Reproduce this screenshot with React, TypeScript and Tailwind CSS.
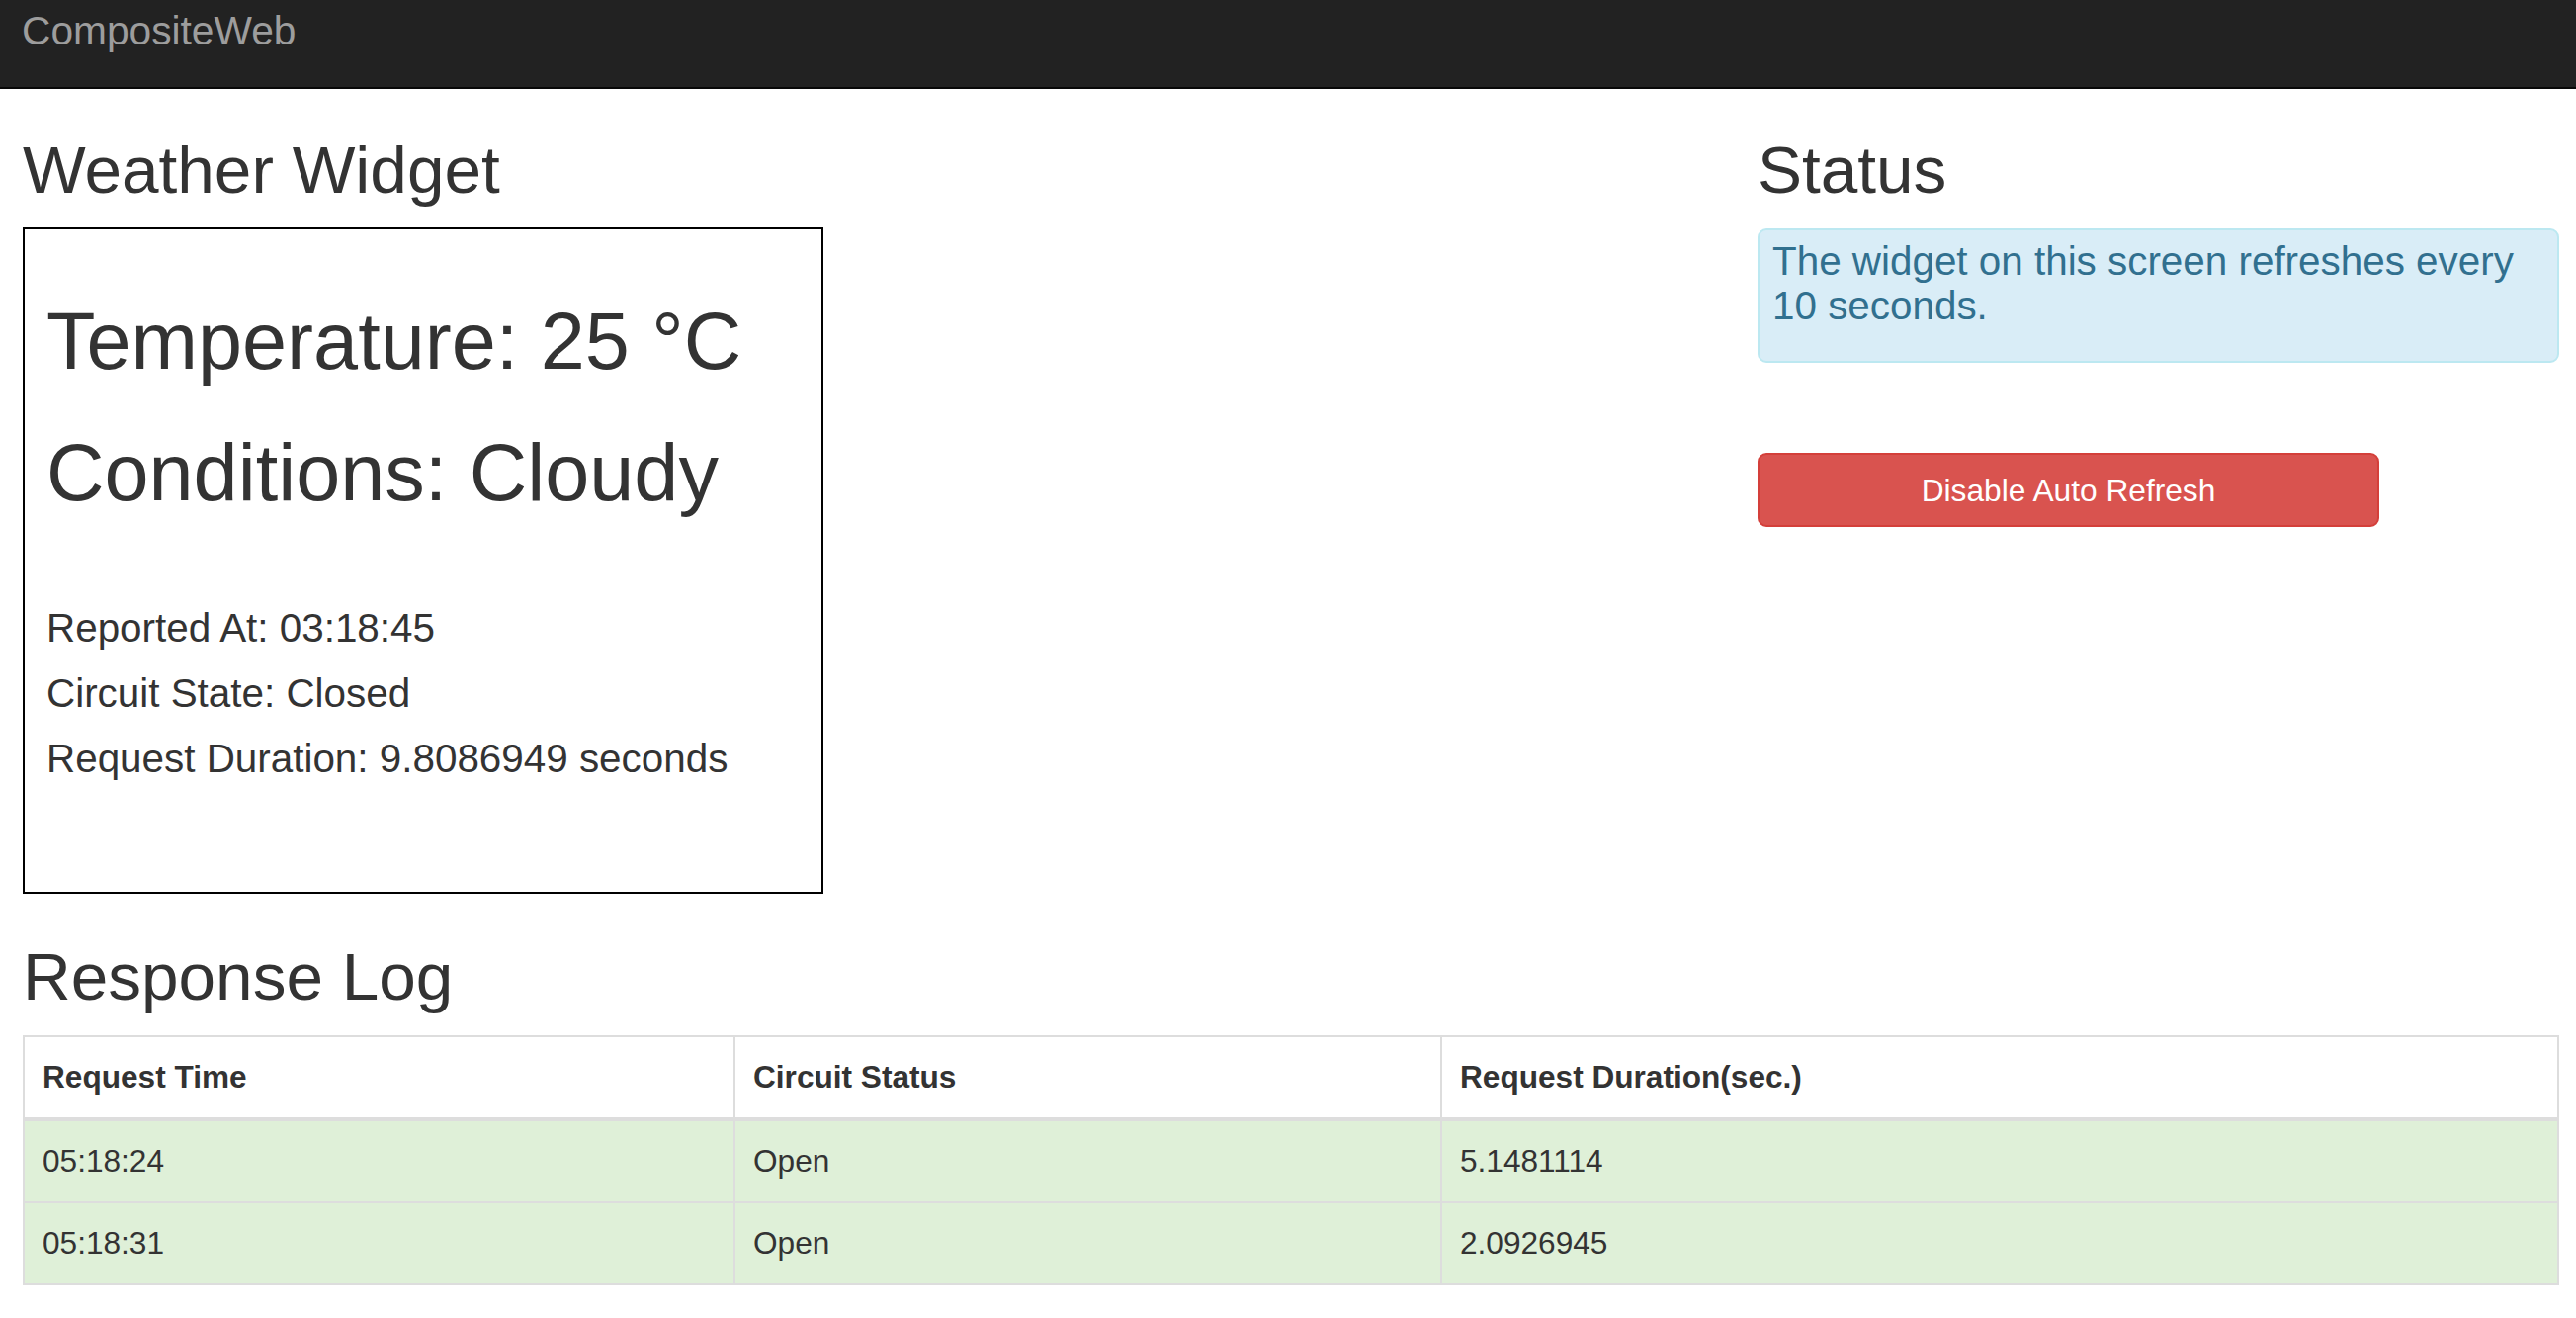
import React from 'react';

const responseLog = [
  { time: '05:18:24', status: 'Open', duration: '5.1481114' },
  { time: '05:18:31', status: 'Open', duration: '2.0926945' },
];

export default function App() {
  return (
    <div className="min-h-screen bg-white font-['Liberation_Sans',Arial,sans-serif] text-[#333]">
      {/* Navbar */}
      <nav className="h-[90px] bg-[#222] border-b-2 border-[#080808]">
        <div className="pl-[22px] pt-[9px] text-[40.7px] leading-[45px] text-[#9d9d9d]">CompositeWeb</div>
      </nav>

      <main className="pl-[23px] pr-[17px]">
        <div className="flex">
          {/* Weather widget column */}
          <div className="w-[1755px] shrink-0">
            <h2 className="mt-[45px] text-[67.5px] leading-[74px] font-normal">Weather Widget</h2>
            <div className="mt-[21px] w-[810px] h-[674px] border-2 border-black px-[22px] pt-[69px]">
              <h1 className="text-[81px] leading-[88px] font-normal">Temperature: 25 °C</h1>
              <h1 className="mt-[45px] text-[81px] leading-[88px] font-normal">Conditions: Cloudy</h1>
              <h4 className="mt-[91px] text-[40.4px] leading-[44px] font-normal">Reported At: 03:18:45</h4>
              <h4 className="mt-[22px] text-[40.4px] leading-[44px] font-normal">Circuit State: Closed</h4>
              <h4 className="mt-[22px] text-[40.4px] leading-[44px] font-normal">
                Request Duration: 9.8086949 seconds
              </h4>
            </div>
          </div>

          {/* Status column */}
          <div className="flex-1">
            <h2 className="mt-[45px] text-[67.5px] leading-[74px] font-normal">Status</h2>
            <div className="mt-[22px] border-2 border-[#bce8f1] bg-[#d9edf7] rounded-[9px] pl-[13px] pr-[13px] pt-[9px] pb-[33px] text-[40.4px] leading-[45px] text-[#31708f]">
              The widget on this screen refreshes every 10 seconds.
            </div>
            <button className="mt-[91px] w-[629px] h-[75px] flex items-center justify-center bg-[#d9534f] border-2 border-[#d43f3a] rounded-[9px] text-white text-[31.7px] leading-[44px]">
              Disable Auto Refresh
            </button>
          </div>
        </div>

        {/* Response log */}
        <h2 className="mt-[47px] text-[67.5px] leading-[74px] font-normal">Response Log</h2>
        <table className="mt-[22px] w-[2566px] table-fixed border-collapse text-[31.6px] leading-[45px]">
          <thead>
            <tr>
              <th className="w-[719px] border-2 border-b-4 border-[#ddd] px-[18px] py-[18px] text-left font-bold">
                Request Time
              </th>
              <th className="w-[715px] border-2 border-b-4 border-[#ddd] px-[18px] py-[18px] text-left font-bold">
                Circuit Status
              </th>
              <th className="border-2 border-b-4 border-[#ddd] px-[18px] py-[18px] text-left font-bold">
                Request Duration(sec.)
              </th>
            </tr>
          </thead>
          <tbody>
            {responseLog.map((row) => (
              <tr key={row.time} className="bg-[#dff0d8]">
                <td className="border-2 border-[#ddd] px-[18px] py-[18px]">{row.time}</td>
                <td className="border-2 border-[#ddd] px-[18px] py-[18px]">{row.status}</td>
                <td className="border-2 border-[#ddd] px-[18px] py-[18px]">{row.duration}</td>
              </tr>
            ))}
          </tbody>
        </table>
      </main>
    </div>
  );
}
